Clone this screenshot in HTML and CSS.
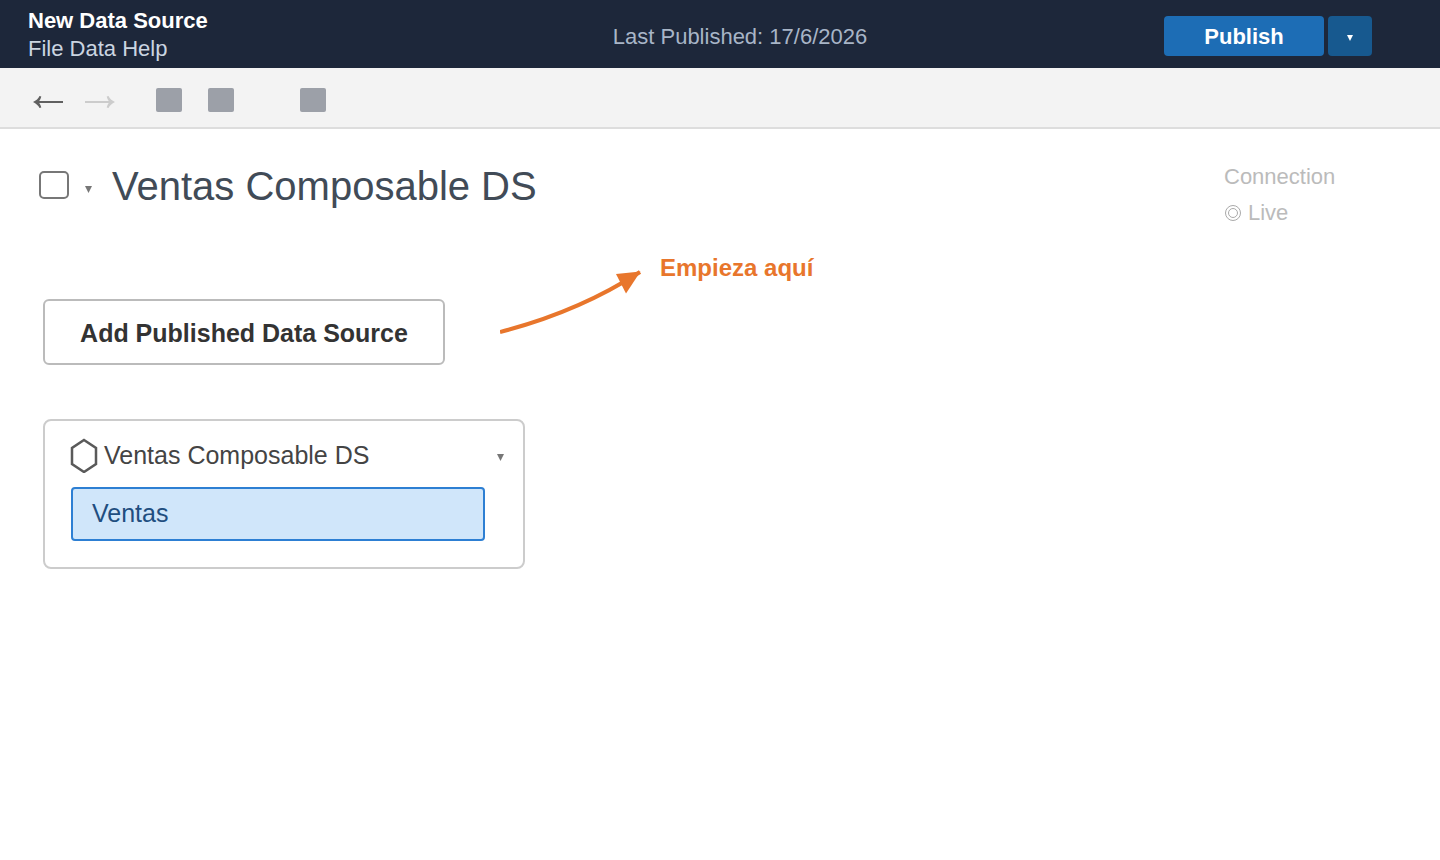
FILE: index.html
```html
<!DOCTYPE html>
<html lang="es">
<head>
    <meta charset="UTF-8">
    <meta name="viewport" content="width=device-width, initial-scale=1.0">
    <title>New Data Source</title>
    <link rel="stylesheet" href="styles.css">
</head>
<body>
    <header class="topbar">
        <div class="topbar-left">
            <div class="topbar-title">New Data Source</div>
            <nav class="menu">
                <a href="#">File</a> <a href="#">Data</a> <a href="#">Help</a>
            </nav>
        </div>
        <div class="published">Last Published: 17/6/2026</div>
        <div class="publish-group">
            <button type="button" class="publish-btn">Publish</button>
            <button type="button" class="publish-more" aria-label="Publish options">
                <svg class="caret caret-small" viewBox="0 0 7 7"><path d="M0 0h7L3.5 7z"/></svg>
            </button>
        </div>
    </header>

    <div class="toolbar">
        <button type="button" class="nav-btn" aria-label="Undo">
            <svg viewBox="0 0 32 24"><path class="shaft" d="M3 14H31"/><path class="head" d="M1 14C4 12.500 6.500 10.500 7.500 8L9.300 8.500C8.800 10.500 7.800 12.500 6.500 14C7.800 15.500 8.800 17.500 9.300 19.500L7.500 20C6.500 17.500 4 15.500 1 14z"/></svg>
        </button>
        <button type="button" class="nav-btn" aria-label="Redo" disabled>
            <svg viewBox="0 0 32 24"><path class="shaft" d="M1 14H29"/><path class="head" d="M31 14C28 12.500 25.500 10.500 24.500 8L22.700 8.500C23.200 10.500 24.200 12.500 25.500 14C24.200 15.500 23.200 17.500 22.700 19.500L24.500 20C25.500 17.500 28 15.500 31 14z"/></svg>
        </button>
        <div class="tools">
            <button type="button" class="tool" aria-label="Save"></button>
            <button type="button" class="tool" aria-label="Refresh"></button>
            <button type="button" class="tool tool-apart" aria-label="New source"></button>
        </div>
    </div>

    <main class="content">
        <div class="source-head">
            <div class="source-name">
                <input type="checkbox" class="source-check" aria-label="Ventas Composable DS">
                <button type="button" class="caret-btn" aria-label="Source options">
                    <svg class="caret" viewBox="0 0 7 7"><path d="M0 0h7L3.5 7z"/></svg>
                </button>
                <h1>Ventas Composable DS</h1>
            </div>
            <fieldset class="connection">
                <legend>Connection</legend>
                <label for="live"><input type="radio" id="live" name="connection" checked>Live</label>
            </fieldset>
        </div>

        <div class="start-row">
            <button type="button" class="add-source">Add Published Data Source</button>
            <svg class="hint-arrow" viewBox="0 0 144 68">
                <path d="M0 64Q78 44 140 4" fill="none" stroke="#e8762c" stroke-width="4"/>
                <path d="M116 6L140.500 3.500L126 25.500z" fill="#e8762c"/>
            </svg>
            <strong class="hint">Empieza aquí</strong>
        </div>

        <section class="card">
            <div class="card-header">
                <svg class="hexagon" viewBox="0 0 30 36"><path d="M15 3L27 11V27L15 35L3 27V11z"/></svg>
                <h2>Ventas Composable DS</h2>
                <button type="button" class="caret-btn" aria-label="Card options">
                    <svg class="caret" viewBox="0 0 7 7"><path d="M0 0h7L3.5 7z"/></svg>
                </button>
            </div>
            <button type="button" class="table-item">Ventas</button>
        </section>
    </main>
</body>
</html>
```
FILE: styles.css
```css
* {
    box-sizing: border-box;
}
body {
    margin: 0;
    font-family: "Liberation Sans", Arial, sans-serif;
    font-size: 22px;
    background-color: #fff;
}
button {
    padding: 0;
    border: none;
    background: none;
    font-family: inherit;
    cursor: pointer;
}
h1, h2 {
    margin: 0;
    font-weight: normal;
}
.topbar {
    display: flex;
    align-items: center;
    padding: 7px 68px 5px 28px;
    background-color: #1d273a;
    line-height: 28px;
}
.topbar-left {
    width: 288px;
}
.topbar-title {
    color: #fff;
    font-weight: bold;
}
.menu a {
    color: #cbd5e1;
    text-decoration: none;
}
.published {
    flex: 1;
    padding-top: 4px;
    color: #a8b5c7;
    text-align: center;
}
.publish-group {
    display: flex;
    gap: 4px;
    padding-top: 2px;
}
.publish-btn, .publish-more {
    height: 40px;
    padding-top: 2px;
    border-radius: 4px;
    color: #fff;
}
.publish-btn {
    width: 160px;
    background-color: #1d6db5;
    font-size: 22px;
    font-weight: bold;
}
.publish-more {
    width: 44px;
    background-color: #17598f;
}
.caret {
    display: block;
    width: 7px;
    height: 7px;
    fill: currentColor;
}
.caret-small {
    width: 6px;
    height: 6px;
    margin: 2px auto 0;
}
.caret-btn {
    color: #777;
}
.toolbar {
    display: flex;
    gap: 20px;
    padding: 20px 32px 15px;
    background-color: #f3f3f3;
    border-bottom: 2px solid #ddd;
}
.nav-btn {
    width: 32px;
    height: 24px;
    color: #606060;
}
.nav-btn:disabled {
    color: #ccc;
}
.nav-btn svg {
    display: block;
    width: 32px;
    height: 24px;
}
.shaft {
    stroke: currentColor;
    stroke-width: 2;
}
.head {
    fill: currentColor;
}
.tools {
    display: flex;
    gap: 26px;
    margin-left: 20px;
}
.tool {
    width: 26px;
    height: 24px;
    border-radius: 2px;
    background-color: #9ca0a8;
}
.tool-apart {
    margin-left: 40px;
}
.content {
    padding: 30px 39px;
}
.source-head {
    display: flex;
    justify-content: space-between;
    align-items: flex-start;
}
.source-name {
    display: flex;
    align-items: center;
    padding-top: 3px;
}
.source-check {
    appearance: none;
    width: 30px;
    height: 28px;
    margin: 0 16px 2px 0;
    border: 2px solid #777;
    border-radius: 5px;
    background-color: #fff;
}
.source-name .caret-btn {
    margin: 6px 20px 0 0;
}
h1 {
    color: #414b57;
    font-size: 40px;
    line-height: 48px;
}
.connection {
    width: 177px;
    margin: 0;
    padding: 0;
    border: none;
    color: #bbb;
    line-height: 36px;
}
.connection legend {
    padding: 0;
}
.connection label {
    display: flex;
    align-items: center;
    gap: 7px;
}
.connection input {
    appearance: none;
    display: grid;
    place-items: center;
    width: 16px;
    height: 16px;
    margin: 0 0 0 1px;
    border: 1px solid #aaa;
    border-radius: 50%;
}
.connection input:checked::before {
    content: "";
    width: 10px;
    height: 10px;
    box-sizing: border-box;
    border: 1px solid #aaa;
    border-radius: 50%;
}
.start-row {
    display: flex;
    align-items: flex-start;
    margin: 25px 0 0 4px;
}
.add-source {
    width: 402px;
    height: 66px;
    margin-top: 43px;
    padding-top: 2px;
    border: 2px solid #bbb;
    border-radius: 6px;
    background-color: #fff;
    color: #333;
    font-size: 25px;
    font-weight: bold;
}
.hint-arrow {
    width: 144px;
    height: 68px;
    margin: 12px 16px 0 55px;
}
.hint {
    color: #e8762c;
    font-size: 24px;
    line-height: 24px;
}
.card {
    width: 482px;
    margin: 54px 0 0 4px;
    padding: 16px 19px 26px 24px;
    border: 2px solid #ccc;
    border-radius: 8px;
    background-color: #fff;
}
.card-header {
    display: flex;
    align-items: center;
    margin-bottom: 14px;
}
.card-header .caret-btn {
    margin-top: 4px;
}
.hexagon {
    width: 30px;
    height: 36px;
    margin-right: 5px;
    fill: none;
    stroke: #5a5a5a;
    stroke-width: 2.5;
}
h2 {
    flex: 1;
    color: #444;
    font-size: 25px;
    line-height: 36px;
}
.table-item {
    display: block;
    width: 414px;
    height: 54px;
    margin-left: 2px;
    padding: 0 19px 2px;
    border: 2px solid #2d7fd3;
    border-radius: 4px;
    background-color: #d0e6fa;
    color: #1f4e80;
    font-size: 25px;
    text-align: left;
}
```
